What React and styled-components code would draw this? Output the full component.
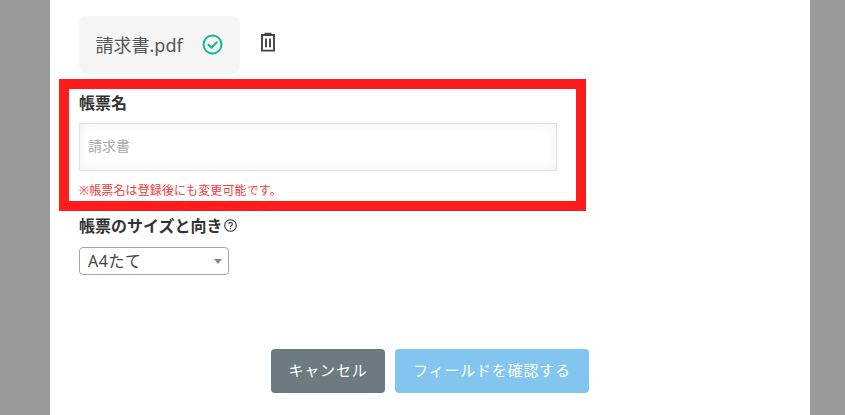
import React from "react";
import styled, { createGlobalStyle } from "styled-components";

const Global = createGlobalStyle`
  html, body { margin: 0; padding: 0; background: #9a9a9a; }
  body { font-family: "Noto Sans", "Noto Sans CJK JP", sans-serif; overflow: hidden; }
`;
const Page = styled.div`
  width: 845px; height: 415px; padding: 0 35px 0 50px; box-sizing: border-box;
`;
const Modal = styled.main`
  width: 760px; height: 415px; background: #fff; box-sizing: border-box;
  padding: 16px 0 0 29px; display: flex; flex-direction: column; color: #333;
`;
const FileRow = styled.div`
  display: flex; align-items: flex-start; height: 58px;
`;
const FileChip = styled.div`
  width: 161px; height: 58px; box-sizing: border-box; padding: 0 17px 2px 16.5px;
  background: #f5f5f5; border-radius: 8px; display: flex; align-items: center; justify-content: space-between;
  font-size: 18px; color: #555;
`;
const TrashButton = styled.span`
  display: flex; margin: 15px 0 0 18px; color: #444;
`;
const Highlight = styled.section`
  width: 527px; height: 132px; box-sizing: border-box; margin: 5px 0 0 -20px;
  border: 10px solid #ff1c1c; padding: 0 0 0 10px; display: flex; flex-direction: column;
`;
const Label = styled.div`
  font-size: 16px; line-height: 24px; font-weight: 700; color: #333; display: flex; align-items: center;
`;
const NameLabel = styled(Label)`
  height: 24px; margin-top: 2px;
`;
const TextField = styled.div`
  width: 478px; height: 48px; box-sizing: border-box; margin-top: 8px; padding: 0 0 4px 8px;
  border: 1px solid #e2e4e4; background: #fff; box-shadow: inset 0 0 12px rgba(0,0,0,0.06);
  display: flex; align-items: center; font-size: 14px; color: #a8a8a8;
`;
const Note = styled.div`
  font-size: 12px; line-height: 16px; margin-top: 12px; color: #f53b3b; letter-spacing: 0.12px;
`;
const SizeLabel = styled(Label)`
  margin-top: 3px; gap: 1px;
`;
const HelpIcon = styled.svg`
  width: 13px; height: 13px; margin-bottom: 2px;
`;
const SelectBox = styled.div`
  width: 150px; height: 28px; box-sizing: border-box; margin-top: 9px; padding: 0 6px 2px 8px;
  border: 1px solid #a5a5a5; border-radius: 4px; display: flex; align-items: center; justify-content: space-between;
  font-size: 16px; color: #444; background: #fff; letter-spacing: 0.5px;
`;
const Caret = styled.span`
  width: 0; height: 0; margin-top: 2px; border-left: 4px solid transparent; border-right: 4px solid transparent;
  border-top: 5px solid #8a8a8a;
`;
const Actions = styled.div`
  display: flex; gap: 10px; justify-content: center; margin: 74px 0 0 -29px;
`;
const Button = styled.button`
  height: 44px; width: ${p => p.$w}px; border: 0; border-radius: 4px; padding: 0 0 3px;
  background: ${p => p.$bg}; color: #fff; font: 400 15px "Noto Sans", "Noto Sans CJK JP", sans-serif;
  letter-spacing: 0.8px;
`;

export default function App() {
  return (
    <Page>
      <Global />
      <Modal>
        <FileRow>
          <FileChip>
            <span>請求書.pdf</span>
            <svg width="21" height="21" viewBox="0 0 21 21" fill="none" stroke="#13b98a" strokeWidth="2">
              <circle cx="10.5" cy="10.5" r="9" />
              <path d="M6.5 10.8l3 3 5.2-5.6" strokeLinecap="round" strokeLinejoin="round" />
            </svg>
          </FileChip>
          <TrashButton>
            <svg width="20" height="22" viewBox="0 0 20 22" fill="none" stroke="#444" strokeWidth="1.9">
              <path d="M3 4h14M7.5 4V2.6h5V4M4 4v15.6h12V4M8 7.5v8.8M12 7.5v8.8" />
            </svg>
          </TrashButton>
        </FileRow>
        <Highlight>
          <NameLabel>帳票名</NameLabel>
          <TextField>請求書</TextField>
          <Note>※帳票名は登録後にも変更可能です。</Note>
        </Highlight>
        <SizeLabel>
          帳票のサイズと向き
          <HelpIcon viewBox="0 0 13 13" fill="none" stroke="#333" strokeWidth="1.1">
            <circle cx="6.5" cy="6.5" r="5.8" />
            <path d="M4.7 5.2c0-2.4 3.7-2.4 3.7-.1 0 1.4-1.9 1.5-1.9 3" />
            <path d="M6.5 9.2v1.1" />
          </HelpIcon>
        </SizeLabel>
        <SelectBox>
          <span>A4たて</span>
          <Caret />
        </SelectBox>
        <Actions>
          <Button $w={114} $bg="#6c7a82">キャンセル</Button>
          <Button $w={194} $bg="#82c6ef">フィールドを確認する</Button>
        </Actions>
      </Modal>
    </Page>
  );
}
